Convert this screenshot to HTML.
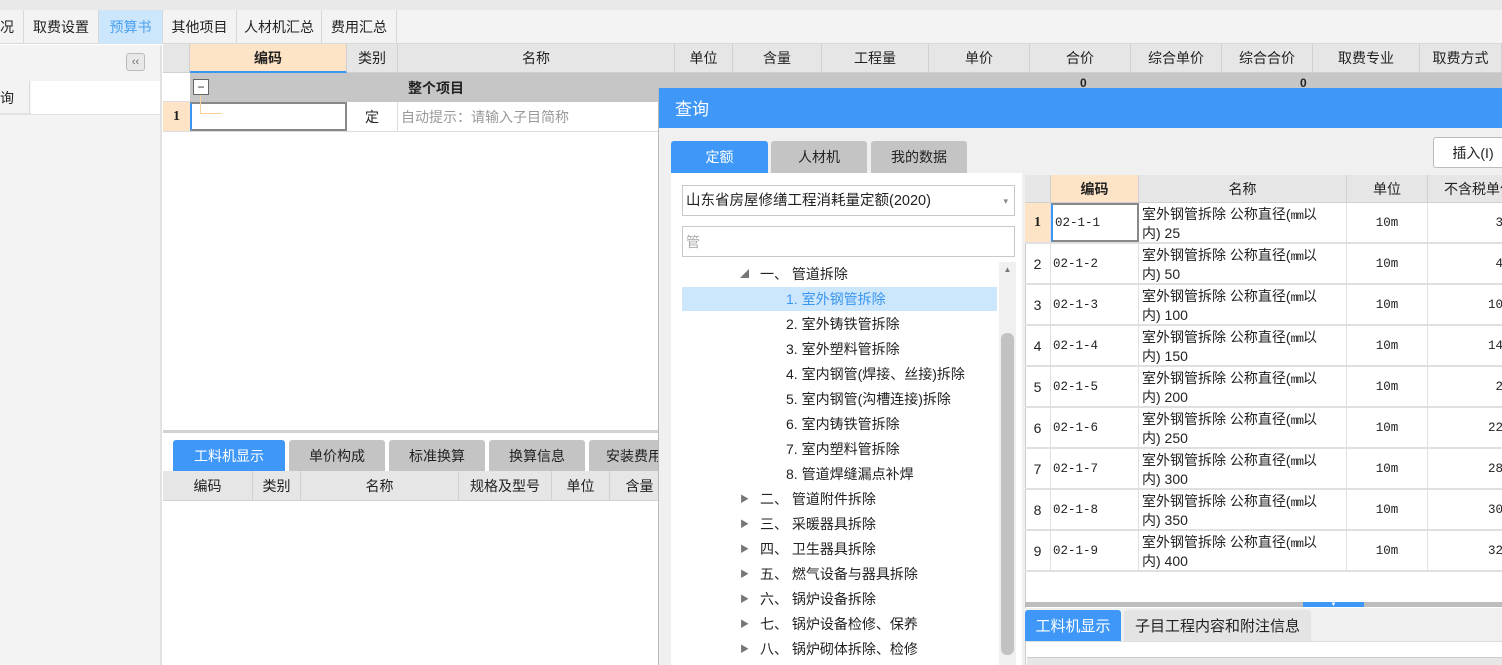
<!DOCTYPE html>
<html><head><meta charset="utf-8"><style>
*{box-sizing:border-box;margin:0;padding:0}
body{width:1502px;height:665px;overflow:hidden;position:relative;background:#fff;font-family:"Liberation Sans","Noto Sans CJK SC",sans-serif;font-size:14px;color:#222}
.a{position:absolute}
.c{position:absolute;display:flex;align-items:center;justify-content:center;white-space:nowrap;overflow:hidden}
.hd{background:#e6e6e6;border-right:1px solid #d0d0d0;border-bottom:1px solid #d0d0d0}
.tab{position:absolute;display:flex;align-items:center;justify-content:center;border-radius:3px 3px 0 0;font-size:14px}
.tr{position:absolute;left:682px;font-size:14px;white-space:nowrap;height:25px;line-height:25px}
.mono{font-family:"Liberation Mono","Noto Sans CJK SC",monospace;font-size:12.5px}
</style></head><body>
<!-- top -->
<div class="a" style="left:0;top:0;width:1502px;height:10px;background:#e9e9e9"></div>
<div class="a" style="left:0;top:10px;width:1502px;height:34px;background:#f3f3f3;border-bottom:1px solid #d8d8d8"></div>
<div class="c" style="left:0;top:10px;width:24px;height:34px;border-right:1px solid #d8d8d8;justify-content:flex-start">况</div>
<div class="c" style="left:24px;top:10px;width:75px;height:34px;border-right:1px solid #d8d8d8">取费设置</div>
<div class="c" style="left:99px;top:10px;width:63px;height:34px;background:#cce6fb;color:#4aa0f0">预算书</div>
<div class="c" style="left:162px;top:10px;width:75px;height:34px;border-right:1px solid #d8d8d8;border-left:1px solid #d8d8d8">其他项目</div>
<div class="c" style="left:237px;top:10px;width:85px;height:34px;border-right:1px solid #d8d8d8">人材机汇总</div>
<div class="c" style="left:322px;top:10px;width:75px;height:34px;border-right:1px solid #d8d8d8">费用汇总</div>
<!-- left panel -->
<div class="a" style="left:0;top:45px;width:162px;height:620px;background:#f3f3f3;border-right:2px solid #e2e2e2"></div>
<div class="c" style="left:126px;top:53px;width:19px;height:18px;border:1px solid #bbb;border-radius:3px;background:#e8e8e8;font-size:11px;color:#666">‹‹</div>
<div class="a" style="left:0;top:81px;width:160px;height:34px;border-bottom:2px solid #e2e2e2"></div>
<div class="c" style="left:0;top:81px;width:30px;height:34px;justify-content:flex-start;border-right:1px solid #ddd">询</div>
<div class="a" style="left:31px;top:81px;width:129px;height:33px;background:#fff"></div>
<!-- main grid header -->
<div class="c hd" style="left:163px;top:44px;width:27px;height:29px"></div>
<div class="c hd" style="left:190px;top:44px;width:157px;height:29px;background:#fde4c6;border-bottom:2px solid #3a96f0;font-weight:bold">编码</div>
<div class="c hd" style="left:347px;top:44px;width:51px;height:29px">类别</div>
<div class="c hd" style="left:398px;top:44px;width:277px;height:29px">名称</div>
<div class="c hd" style="left:675px;top:44px;width:58px;height:29px">单位</div>
<div class="c hd" style="left:733px;top:44px;width:89px;height:29px">含量</div>
<div class="c hd" style="left:822px;top:44px;width:107px;height:29px">工程量</div>
<div class="c hd" style="left:929px;top:44px;width:101px;height:29px">单价</div>
<div class="c hd" style="left:1030px;top:44px;width:101px;height:29px">合价</div>
<div class="c hd" style="left:1131px;top:44px;width:91px;height:29px">综合单价</div>
<div class="c hd" style="left:1222px;top:44px;width:91px;height:29px">综合合价</div>
<div class="c hd" style="left:1313px;top:44px;width:107px;height:29px">取费专业</div>
<div class="c hd" style="left:1420px;top:44px;width:82px;height:29px">取费方式</div>
<div class="a" style="left:163px;top:73px;width:27px;height:29px;background:#fff;border-bottom:1px solid #ddd"></div>
<div class="a" style="left:190px;top:73px;width:1312px;height:29px;background:#c6c6c6"></div>
<div class="c" style="left:193px;top:79px;width:16px;height:16px;border:1px solid #666;background:#fff;font-size:12px">−</div>
<div class="c" style="left:401px;top:73px;width:70px;height:29px;font-weight:bold">整个项目</div>
<div class="c" style="left:163px;top:102px;width:27px;height:29px;background:#fde4c6;font-weight:bold;font-family:'Liberation Serif',serif">1</div>
<div class="a" style="left:190px;top:102px;width:157px;height:29px;border:2px solid #888;border-left-color:#3a96f0"></div>
<div class="a" style="left:200px;top:95px;width:22px;height:19px;border-left:1px solid #fcd19a;border-bottom:1px solid #fcd19a"></div>
<div class="c" style="left:347px;top:102px;width:51px;height:29px;border-right:1px solid #ddd">定</div>
<div class="c" style="left:401px;top:102px;width:256px;height:29px;justify-content:flex-start;color:#999">自动提示：请输入子目简称</div>
<div class="a" style="left:163px;top:131px;width:495px;height:1px;background:#ddd"></div>
<!-- bottom area -->
<div class="a" style="left:163px;top:430px;width:495px;height:3px;background:#d2d2d2"></div>
<div class="tab" style="left:173px;top:440px;width:112px;height:31px;background:#3f98f8;color:#fff">工料机显示</div>
<div class="tab" style="left:289px;top:440px;width:96px;height:31px;background:#c4c4c4">单价构成</div>
<div class="tab" style="left:389px;top:440px;width:96px;height:31px;background:#c4c4c4">标准换算</div>
<div class="tab" style="left:489px;top:440px;width:96px;height:31px;background:#c4c4c4">换算信息</div>
<div class="tab" style="left:589px;top:440px;width:80px;height:31px;background:#c4c4c4;justify-content:flex-start;padding-left:17px">安装费用</div>
<div class="a" style="left:163px;top:471px;width:495px;height:30px;background:#e6e6e6;border-bottom:2px solid #d4d4d4"></div>
<div class="c hd" style="left:163px;top:471px;width:90px;height:30px">编码</div>
<div class="c hd" style="left:253px;top:471px;width:48px;height:30px">类别</div>
<div class="c hd" style="left:301px;top:471px;width:158px;height:30px">名称</div>
<div class="c hd" style="left:459px;top:471px;width:93px;height:30px">规格及型号</div>
<div class="c hd" style="left:552px;top:471px;width:58px;height:30px">单位</div>
<div class="c hd" style="left:610px;top:471px;width:60px;height:30px">含量</div>
<div class="a" style="left:1080px;top:76px;font-size:12px;font-weight:bold">0</div>
<div class="a" style="left:1300px;top:76px;font-size:12px;font-weight:bold">0</div>
<!-- dialog -->
<div class="a" style="left:658px;top:88px;width:844px;height:577px;background:#f0f0f0;border-left:1px solid #bbb"></div>
<div class="a" style="left:659px;top:88px;width:843px;height:40px;background:#3f98f8;color:#fff;font-size:17px;line-height:44px;padding-left:16px">查询</div>
<div class="tab" style="left:671px;top:141px;width:97px;height:32px;background:#3f98f8;color:#fff">定额</div>
<div class="tab" style="left:771px;top:141px;width:96px;height:32px;background:#c4c4c4">人材机</div>
<div class="tab" style="left:871px;top:141px;width:96px;height:32px;background:#c4c4c4">我的数据</div>
<div class="c" style="left:1433px;top:137px;width:80px;height:31px;background:#fff;border:1px solid #bbb;border-radius:3px">插入(I)</div>
<div class="a" style="left:671px;top:173px;width:351px;height:492px;background:#fff"></div>
<div class="a" style="left:682px;top:185px;width:333px;height:31px;border:1px solid #c8c8c8;font-size:14.5px;line-height:30px;padding-left:3px">山东省房屋修缮工程消耗量定额(2020)<span style="position:absolute;right:6px;color:#888;font-size:9px">▾</span></div>
<div class="a" style="left:682px;top:226px;width:333px;height:31px;border:1px solid #c8c8c8;color:#aaa;line-height:30px;padding-left:3px">管</div>
<div class="a" style="left:682px;top:287px;width:315px;height:24px;background:#cce6fb"></div>
<div class="tr" style="top:262px;left:740px;font-size:9px;color:#777">◢</div>
<div class="tr" style="top:262px;left:760px">一、 管道拆除</div>
<div class="tr" style="top:287px;left:786px;color:#3a96f0">1. 室外钢管拆除</div>
<div class="tr" style="top:312px;left:786px">2. 室外铸铁管拆除</div>
<div class="tr" style="top:337px;left:786px">3. 室外塑料管拆除</div>
<div class="tr" style="top:362px;left:786px">4. 室内钢管(焊接、丝接)拆除</div>
<div class="tr" style="top:387px;left:786px">5. 室内钢管(沟槽连接)拆除</div>
<div class="tr" style="top:412px;left:786px">6. 室内铸铁管拆除</div>
<div class="tr" style="top:437px;left:786px">7. 室内塑料管拆除</div>
<div class="tr" style="top:462px;left:786px">8. 管道焊缝漏点补焊</div>
<div class="tr" style="top:487px;left:740px;font-size:9px;color:#777">▶</div><div class="tr" style="top:487px;left:760px">二、 管道附件拆除</div>
<div class="tr" style="top:512px;left:740px;font-size:9px;color:#777">▶</div><div class="tr" style="top:512px;left:760px">三、 采暖器具拆除</div>
<div class="tr" style="top:537px;left:740px;font-size:9px;color:#777">▶</div><div class="tr" style="top:537px;left:760px">四、 卫生器具拆除</div>
<div class="tr" style="top:562px;left:740px;font-size:9px;color:#777">▶</div><div class="tr" style="top:562px;left:760px">五、 燃气设备与器具拆除</div>
<div class="tr" style="top:587px;left:740px;font-size:9px;color:#777">▶</div><div class="tr" style="top:587px;left:760px">六、 锅炉设备拆除</div>
<div class="tr" style="top:612px;left:740px;font-size:9px;color:#777">▶</div><div class="tr" style="top:612px;left:760px">七、 锅炉设备检修、保养</div>
<div class="tr" style="top:637px;left:740px;font-size:9px;color:#777">▶</div><div class="tr" style="top:637px;left:760px">八、 锅炉砌体拆除、检修</div>
<div class="a" style="left:999px;top:262px;width:17px;height:403px;background:#f0f0f0"></div>
<div class="c" style="left:999px;top:262px;width:17px;height:14px;font-size:8px;color:#777">▲</div>
<div class="a" style="left:1001px;top:333px;width:13px;height:322px;background:#c2c2c2;border-radius:6px"></div>
<!-- right grid -->
<div class="a" style="left:1025px;top:175px;width:477px;height:490px;background:#fff;border-left:1px solid #ccc"></div>
<div class="c hd" style="left:1025px;top:175px;width:26px;height:28px"></div>
<div class="c hd" style="left:1051px;top:175px;width:88px;height:28px;background:#fde4c6;font-weight:bold">编码</div>
<div class="c hd" style="left:1139px;top:175px;width:208px;height:28px">名称</div>
<div class="c hd" style="left:1347px;top:175px;width:81px;height:28px">单位</div>
<div class="c hd" style="left:1428px;top:175px;width:80px;height:28px;justify-content:flex-start;padding-left:16px">不含税单价</div>
<div class="a" style="left:1025px;top:602px;width:477px;height:5px;background:#bdbdbd"></div>
<div class="c" style="left:1303px;top:602px;width:61px;height:5px;background:#3f98f8;color:#fff;font-size:6px">▼</div>
<div class="a" style="left:1025px;top:608px;width:477px;height:33px;background:#f0f0f0"></div>
<div class="tab" style="left:1025px;top:610px;width:96px;height:31px;background:#3f98f8;color:#fff;font-size:15px">工料机显示</div>
<div class="tab" style="left:1124px;top:610px;width:187px;height:31px;background:#e4e4e4;font-size:15px">子目工程内容和附注信息</div>
<div class="a" style="left:1025px;top:641px;width:477px;height:1px;background:#ddd"></div>
<div class="a" style="left:1027px;top:657px;width:475px;height:8px;background:#e6e6e6;border-top:1px solid #ccc"></div>
<style>.r{position:absolute;left:1025px;width:477px;height:41px;border-bottom:2px solid #e0e0e0}
.r div{position:absolute;top:0;height:39px;display:flex;align-items:center;border-right:1px solid #e0e0e0;white-space:nowrap;overflow:hidden}
.r div.n{display:block;left:114px;width:208px;padding:3px 0 0 3px;line-height:17px;font-size:14px}
.r .n span{font-family:"Liberation Mono",monospace;font-size:12px;letter-spacing:-1px}</style>
<div class="r" style="top:203px"><div style="left:0;width:26px;justify-content:center;background:#fde4c6;font-family:'Liberation Serif',serif;font-weight:bold">1</div><div class="mono" style="left:26px;width:88px;padding-left:2px;border:2px solid #888;border-left-color:#3a96f0">02-1-1</div><div class="n">室外钢管拆除 公称直径(<span>mm</span>以<br>内) 25</div><div class="mono" style="left:322px;width:81px;justify-content:center">10m</div><div class="mono" style="left:403px;width:80px;justify-content:flex-end;padding-right:4px">3</div></div>
<div class="r" style="top:244px"><div style="left:0;width:26px;justify-content:center">2</div><div class="mono" style="left:26px;width:88px;padding-left:2px">02-1-2</div><div class="n">室外钢管拆除 公称直径(<span>mm</span>以<br>内) 50</div><div class="mono" style="left:322px;width:81px;justify-content:center">10m</div><div class="mono" style="left:403px;width:80px;justify-content:flex-end;padding-right:4px">4</div></div>
<div class="r" style="top:285px"><div style="left:0;width:26px;justify-content:center">3</div><div class="mono" style="left:26px;width:88px;padding-left:2px">02-1-3</div><div class="n">室外钢管拆除 公称直径(<span>mm</span>以<br>内) 100</div><div class="mono" style="left:322px;width:81px;justify-content:center">10m</div><div class="mono" style="left:403px;width:80px;justify-content:flex-end;padding-right:4px">10</div></div>
<div class="r" style="top:326px"><div style="left:0;width:26px;justify-content:center">4</div><div class="mono" style="left:26px;width:88px;padding-left:2px">02-1-4</div><div class="n">室外钢管拆除 公称直径(<span>mm</span>以<br>内) 150</div><div class="mono" style="left:322px;width:81px;justify-content:center">10m</div><div class="mono" style="left:403px;width:80px;justify-content:flex-end;padding-right:4px">14</div></div>
<div class="r" style="top:367px"><div style="left:0;width:26px;justify-content:center">5</div><div class="mono" style="left:26px;width:88px;padding-left:2px">02-1-5</div><div class="n">室外钢管拆除 公称直径(<span>mm</span>以<br>内) 200</div><div class="mono" style="left:322px;width:81px;justify-content:center">10m</div><div class="mono" style="left:403px;width:80px;justify-content:flex-end;padding-right:4px">2</div></div>
<div class="r" style="top:408px"><div style="left:0;width:26px;justify-content:center">6</div><div class="mono" style="left:26px;width:88px;padding-left:2px">02-1-6</div><div class="n">室外钢管拆除 公称直径(<span>mm</span>以<br>内) 250</div><div class="mono" style="left:322px;width:81px;justify-content:center">10m</div><div class="mono" style="left:403px;width:80px;justify-content:flex-end;padding-right:4px">22</div></div>
<div class="r" style="top:449px"><div style="left:0;width:26px;justify-content:center">7</div><div class="mono" style="left:26px;width:88px;padding-left:2px">02-1-7</div><div class="n">室外钢管拆除 公称直径(<span>mm</span>以<br>内) 300</div><div class="mono" style="left:322px;width:81px;justify-content:center">10m</div><div class="mono" style="left:403px;width:80px;justify-content:flex-end;padding-right:4px">28</div></div>
<div class="r" style="top:490px"><div style="left:0;width:26px;justify-content:center">8</div><div class="mono" style="left:26px;width:88px;padding-left:2px">02-1-8</div><div class="n">室外钢管拆除 公称直径(<span>mm</span>以<br>内) 350</div><div class="mono" style="left:322px;width:81px;justify-content:center">10m</div><div class="mono" style="left:403px;width:80px;justify-content:flex-end;padding-right:4px">30</div></div>
<div class="r" style="top:531px"><div style="left:0;width:26px;justify-content:center">9</div><div class="mono" style="left:26px;width:88px;padding-left:2px">02-1-9</div><div class="n">室外钢管拆除 公称直径(<span>mm</span>以<br>内) 400</div><div class="mono" style="left:322px;width:81px;justify-content:center">10m</div><div class="mono" style="left:403px;width:80px;justify-content:flex-end;padding-right:4px">32</div></div>
</body></html>
